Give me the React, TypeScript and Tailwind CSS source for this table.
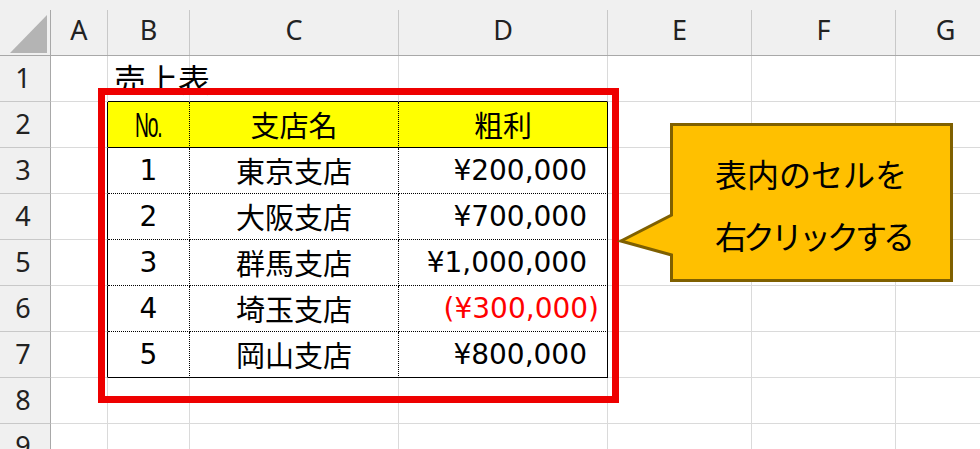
import React from 'react';

const cols = [
  { key: 'A', w: 'w-[57px]' },
  { key: 'B', w: 'w-[82px]' },
  { key: 'C', w: 'w-[209px]' },
  { key: 'D', w: 'w-[209px]' },
  { key: 'E', w: 'w-[144px]' },
  { key: 'F', w: 'w-[144px]' },
  { key: 'G', w: 'w-[100px]' },
];

const rows = [
  { no: '1', name: '東京支店', amt: '¥200,000' },
  { no: '2', name: '大阪支店', amt: '¥700,000' },
  { no: '3', name: '群馬支店', amt: '¥1,000,000' },
  { no: '4', name: '埼玉支店', amt: '(¥300,000)', neg: true },
  { no: '5', name: '岡山支店', amt: '¥800,000' },
];

const jp = "font-['Noto_Sans_CJK_JP',sans-serif]";
const num = "font-['DejaVu_Sans','Noto_Sans_CJK_JP',sans-serif]";

function borders(c: number, r: number) {
  const inT = r >= 2 && r <= 7;
  let right = 'border-r-[#dadada]';
  if (inT && (c === 0 || c === 3)) right = 'border-r-black';
  if (inT && (c === 1 || c === 2)) right = 'border-r-black [border-right-style:dotted]';
  let bottom = 'border-b-[#dadada]';
  if (c >= 1 && c <= 3) {
    if (r === 1 || r === 2 || r === 7) bottom = 'border-b-black';
    if (r >= 3 && r <= 6) bottom = 'border-b-black [border-bottom-style:dotted]';
  }
  return `${right} ${bottom}`;
}

function cellContent(c: number, r: number) {
  if (r === 1 && c === 1)
    return (
      <div className={`self-start pt-[6px] pl-[6px] whitespace-nowrap text-[32px] leading-none text-black ${jp}`}>
        売上表
      </div>
    );
  if (r === 2) {
    if (c === 1)
      return (
        <div className="w-full flex justify-center">
          <span className="inline-block [transform:scaleX(0.55)] text-[35px] leading-none tracking-[-2px] font-['Liberation_Sans',sans-serif]">
            No.
          </span>
        </div>
      );
    if (c === 2) return <div className={`w-full text-center text-[29px] ${jp}`}>支店名</div>;
    if (c === 3) return <div className={`w-full text-center text-[29px] ${jp}`}>粗利</div>;
  }
  if (r >= 3 && r <= 7) {
    const d = rows[r - 3];
    if (c === 1) return <div className={`w-full text-center text-[28px] ${num}`}>{d.no}</div>;
    if (c === 2) return <div className={`w-full text-center text-[29px] ${jp}`}>{d.name}</div>;
    if (c === 3)
      return (
        <div className={`w-full flex justify-end pr-[20px] text-[28px] ${num}`}>
          {d.neg ? <span className="text-[#ff0000] -mr-[12px]">{d.amt}</span> : <span>{d.amt}</span>}
        </div>
      );
  }
  return null;
}

export default function App() {
  const rowNums = [1, 2, 3, 4, 5, 6, 7, 8, 9];
  return (
    <div className="relative w-[980px] h-[449px] overflow-hidden bg-white text-black">
      {/* column header */}
      <div className="flex h-[56px] bg-[#f0f0f0] border-b border-b-[#a8a8a8]">
        <div className="w-[51px] shrink-0 pt-[10px]">
          <div className="h-full border-r border-r-[#a8a8a8] relative">
            <svg width="50" height="46" viewBox="0 0 50 46" className="block">
              <polygon points="10,43 47,43 47,5" fill="#b4b4b4" />
            </svg>
          </div>
        </div>
        {cols.map((col) => (
          <div key={col.key} className={`${col.w} shrink-0 pt-[10px]`}>
            <div
              className={`h-full border-r border-r-[#c8c8c8] flex items-center justify-center pb-[4px] text-[27px] text-[#222] font-['Noto_Sans',sans-serif]`}
            >
              {col.key}
            </div>
          </div>
        ))}
      </div>

      {/* rows */}
      {rowNums.map((r) => (
        <div key={r} className="flex h-[46px]">
          <div
            className={`w-[51px] shrink-0 bg-[#f0f0f0] border-r border-b border-r-[#a8a8a8] border-b-[#c8c8c8] flex items-center justify-center pr-[4px] text-[27px] text-[#222] font-['Noto_Sans',sans-serif]`}
          >
            {r}
          </div>
          {cols.map((col, c) => (
            <div
              key={col.key}
              className={`${col.w} shrink-0 border-r border-b ${borders(c, r)} flex items-center ${
                r === 2 && c >= 1 && c <= 3 ? 'bg-[#ffff00]' : ''
              }`}
            >
              {cellContent(c, r)}
            </div>
          ))}
        </div>
      ))}

      {/* red frame */}
      <div className="absolute left-[98px] top-[88px] w-[521px] h-[315px] border-[7px] border-[#ee0000]" />

      {/* callout */}
      <div className="absolute left-[616px] top-[120px] w-[340px] h-[166px]">
        <svg width="340" height="166" viewBox="0 0 340 166" className="block">
          <path
            d="M55.5 4.5 H335.5 V160.5 H55.5 V135 L5 121 L55.5 95 Z"
            fill="#ffc000"
            stroke="#7f6000"
            strokeWidth="3"
            strokeLinejoin="miter"
          />
        </svg>
        <div className={`absolute left-[99px] top-[22px] text-[32px] text-black whitespace-nowrap ${jp}`}>
          <div className="leading-[62px]">表内のセルを</div>
          <div className="leading-[62px] tracking-[-4px]">右クリックする</div>
        </div>
      </div>
    </div>
  );
}
